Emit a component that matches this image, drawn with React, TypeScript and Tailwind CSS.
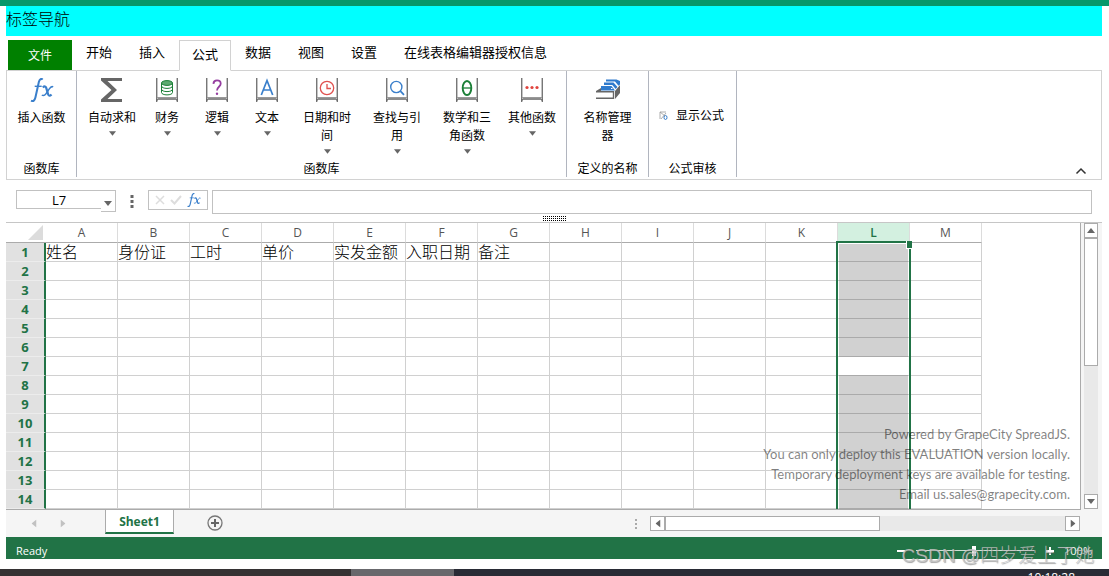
import React, { useState } from 'react';

const tabs = ['开始', '插入', '公式', '数据', '视图', '设置', '在线表格编辑器授权信息'];
const columns = ['A', 'B', 'C', 'D', 'E', 'F', 'G', 'H', 'I', 'J', 'K', 'L', 'M'];
const titles = ['姓名', '身份证', '工时', '单价', '实发金额', '入职日期', '备注'];
const rows = Array.from({ length: 14 }, (_, i) => i + 1);

const BookIcon = ({ children }: { children: React.ReactNode }) => (
	<svg width="24" height="24" viewBox="0 0 24 24" fill="none">
		<path d="M1.5 0v24M22.500 0v24" stroke="#777" />
		<path d="M2.5 0v20M21.500 0v20" stroke="#c4c4c4" />
		<path d="M2 19.500h20" stroke="#999" />
		<path d="M2 23.500v-2l1.500-.5h17l1.500.5v2" stroke="#666" strokeWidth="1.3" />
		{children}
	</svg>
);

const MoneyIcon = () => (
	<BookIcon>
		<path
			d="M6.5 5v9.5c0 1.4 2.500 2.400 5.500 2.400s5.500-1 5.500-2.400V5"
			fill="#fff"
			stroke="#1b7f37"
		/>
		<path
			d="M6.5 8c0 1.4 2.500 2.400 5.500 2.400s5.500-1 5.500-2.400M6.500 11.200c0 1.400 2.500 2.400 5.500 2.400s5.500-1 5.500-2.400"
			stroke="#1b7f37"
		/>
		<ellipse cx="12" cy="5" rx="5.5" ry="2.4" fill="#5cab70" stroke="#1b7f37" />
	</BookIcon>
);

const LogicIcon = () => (
	<BookIcon>
		<path
			d="M8.4 5.800C8.600 3.500 10 2.400 12 2.400c2.200 0 3.700 1.300 3.700 3.300 0 3-3.700 3.200-3.700 6.900"
			stroke="#953da0"
			strokeWidth="1.8"
		/>
		<circle cx="12" cy="15.8" r="1.2" fill="#953da0" />
	</BookIcon>
);

const TextIcon = () => (
	<BookIcon>
		<path d="M6.3 17 12 2.500 17.700 17M8.300 12h7.400" stroke="#3a7fcb" strokeWidth="1.7" />
	</BookIcon>
);

const ClockIcon = () => (
	<BookIcon>
		<circle cx="12" cy="10" r="6.7" stroke="#e0514f" strokeWidth="1.3" />
		<path d="M12 6v4.500h4" stroke="#e0514f" strokeWidth="1.3" />
	</BookIcon>
);

const LookupIcon = () => (
	<BookIcon>
		<circle cx="11.3" cy="9" r="5.6" stroke="#3a7fcb" strokeWidth="1.4" />
		<path d="m15.400 13.200 3.600 3.600" stroke="#3a7fcb" strokeWidth="1.8" />
	</BookIcon>
);

const MathIcon = () => (
	<BookIcon>
		<ellipse cx="12" cy="10" rx="4.3" ry="7" stroke="#1b7f37" strokeWidth="1.9" />
		<path d="M8 10h8" stroke="#1b7f37" strokeWidth="1.3" />
	</BookIcon>
);

const MoreIcon = () => (
	<BookIcon>
		<g fill="#e0443e">
			<circle cx="7" cy="9.5" r="1.6" />
			<circle cx="12" cy="9.5" r="1.6" />
			<circle cx="17" cy="9.5" r="1.6" />
		</g>
	</BookIcon>
);

const SumIcon = () => (
	<svg width="24" height="24" viewBox="0 0 24 24">
		<path d="M1 0h21v3H7.500l9.500 9-9.500 9H22v3H1v-2.500L11.500 12 1 2.500z" fill="#666" />
	</svg>
);

const FxIcon = ({ size }: { size: number }) => (
	<svg width={size} height={size} viewBox="0 0 24 24" fill="none" stroke="#3a7fcb">
		<path
			d="M12.600 1.600C11.500.3 9.700 1 8.900 3.800L5.400 19.500c-.7 3-2.200 4.200-4.400 3.200"
			strokeWidth="2"
		/>
		<path d="M4.700 8.300h7" strokeWidth="1.4" />
		<path d="M12.800 9.500c1.800-1.800 3-1.200 3.500.6l1.800 6.200c.5 1.800 1.700 2 3.400.1" strokeWidth="2.2" />
		<path d="M23.200 8.900c-1.700-.9-2.700.1-3.900 1.900l-3.400 5c-1.200 1.700-2.300 2.200-4.100 1.300" strokeWidth="1.5" />
	</svg>
);

const NameManagerIcon = () => (
	<svg width="26" height="24" viewBox="0 0 26 24">
		<path d="M1 13l5-3v3zM20 13l5-6v8l-5 6z" fill="#666" />
		<path d="M1 13.700h17.500v6.600H1" fill="#fff" stroke="#666" strokeWidth="1.4" />
		<path
			d="M6 12.500V8h10.500l3.500 4.500zM9 7V4.500h9.500L22.500 9l-1.800 2L17.300 7zM11 3.500V1.500h10.500L25 3v3.500l-1.500 1.300L20 3.500z"
			fill="#2f7bcd"
		/>
		<path d="M16 10.500h1.500" stroke="#fff" />
	</svg>
);

const ShowFormulaIcon = () => (
	<svg width="10" height="10" viewBox="0 0 10 10" fill="none">
		<path d="M1 8V1h6M1 1l5 4M2 8l5-6" stroke="#999" strokeWidth=".8" />
		<ellipse cx="6.5" cy="6.5" rx="1.5" ry="2" stroke="#3a7fcb" />
	</svg>
);

// small triangle used by drop-downs and scroll bars
const Arrow = ({ className = '' }: { className?: string }) => (
	<svg className={className} width="8" height="5" viewBox="0 0 8 5">
		<path d="M0 0h8L4 5z" fill="currentColor" />
	</svg>
);

const functions = [
	{ label: '自动求和', icon: <SumIcon />, width: 'w-[60px]' },
	{ label: '财务', icon: <MoneyIcon />, width: 'w-[50px]' },
	{ label: '逻辑', icon: <LogicIcon />, width: 'w-[50px]' },
	{ label: '文本', icon: <TextIcon />, width: 'w-[50px]' },
	{ label: '日期和时间', icon: <ClockIcon />, width: 'w-[70px]' },
	{ label: '查找与引用', icon: <LookupIcon />, width: 'w-[70px]' },
	{ label: '数学和三角函数', icon: <MathIcon />, width: 'w-[70px]' },
	{ label: '其他函数', icon: <MoreIcon />, width: 'w-[60px]' },
];

type RibbonButtonProps = {
	label: string;
	icon: React.ReactNode;
	width: string;
	dropdown?: boolean;
};

const RibbonButton = ({ label, icon, width, dropdown }: RibbonButtonProps) => (
	<button className={`${width} flex flex-col items-center`}>
		{icon}
		<span className="mt-[7px] w-[50px] text-center leading-[18px] break-all">{label}</span>
		{dropdown && <Arrow className="mt-1 w-[7px] text-[#666]" />}
	</button>
);

const RibbonGroup = ({ title, children }: { title: string; children: React.ReactNode }) => (
	<div className="flex flex-col justify-between border-r border-[#b1b5bf] pt-[7px]">
		<div className="flex grow items-start justify-center">{children}</div>
		<div className="text-center leading-4">{title}</div>
	</div>
);

const Ribbon = () => {
	const [active, setActive] = useState('公式');
	return (
		<div className="pt-1">
			<div className="flex h-[30px] pl-[2px] text-[13px]">
				<button className="w-16 bg-[#008000] pt-[2px] text-[12px] text-white">文件</button>
				<div className="ml-px flex gap-px">
					{tabs.map((tab) => (
						<button
							key={tab}
							onClick={() => setActive(tab)}
							className={`border px-3 ${
								tab === active
									? '-mb-px border-[#d2d2d2] border-b-white bg-white pb-[2px]'
									: 'border-transparent pb-1'
							}`}
						>
							{tab}
						</button>
					))}
				</div>
			</div>
			<div className="flex h-[110px] border border-[#d2d2d2] pb-[2px] text-[12px]">
				<RibbonGroup title="函数库">
					<div className="flex w-[69px] justify-center">
						<RibbonButton label="插入函数" icon={<FxIcon size={24} />} width="w-[60px]" />
					</div>
				</RibbonGroup>
				<RibbonGroup title="函数库">
					<div className="flex items-start pr-1 pl-[5px]">
						{functions.map((fn) => (
							<RibbonButton key={fn.label} {...fn} dropdown />
						))}
					</div>
				</RibbonGroup>
				<RibbonGroup title="定义的名称">
					<div className="flex w-[81px] justify-center">
						<RibbonButton label="名称管理器" icon={<NameManagerIcon />} width="w-[60px]" />
					</div>
				</RibbonGroup>
				<RibbonGroup title="公式审核">
					<button className="flex w-[87px] items-center gap-[7px] self-center pb-2 pl-[10px]">
						<ShowFormulaIcon />
						显示公式
					</button>
				</RibbonGroup>
				<button aria-label="collapse" className="mr-[14px] mb-[2px] ml-auto self-end">
					<svg width="12" height="8" viewBox="0 0 12 8" fill="none">
						<path d="M1.500 6.500 6 2l4.500 4.500" stroke="#333" strokeWidth="1.5" />
					</svg>
				</button>
			</div>
		</div>
	);
};

const FormulaBar = () => (
	<div className="flex h-[42px] items-start px-[10px] pt-[10px]">
		<div className="flex">
			<input
				aria-label="name box"
				defaultValue="L7"
				className="h-[19px] w-[85px] border border-r-0 border-[#c1c1c1] pt-[2px] text-center font-['Open_Sans',sans-serif] text-[13px]"
			/>
			<button
				aria-label="names"
				className="flex h-[22px] w-[15px] items-center justify-center border border-l-0 border-[#c1c1c1] pt-1 text-[#666]"
			>
				<Arrow />
			</button>
		</div>
		<svg className="mt-1 ml-[14px]" width="4" height="16" viewBox="0 0 4 16" fill="#666">
			<path d="M.5 1h3v3h-3zM.5 6h3v3h-3zM.5 11h3v3h-3z" />
		</svg>
		<div className="ml-[14px] flex h-5 w-[60px] items-center justify-between border border-[#c1c1c1] px-[6px]">
			<svg width="10" height="10" viewBox="0 0 10 10">
				<path d="m1 1 8 8M9 1 1 9" stroke="#ddd" strokeWidth="1.5" />
			</svg>
			<svg width="12" height="10" viewBox="0 0 12 10" fill="none">
				<path d="m1 5 3.500 3.500L11 1" stroke="#ddd" strokeWidth="2" />
			</svg>
			<FxIcon size={14} />
		</div>
		<div className="ml-1 grow">
			<input aria-label="formula" className="block h-6 w-full border border-[#c1c1c1] px-1" />
			<svg className="mt-[2px] ml-[331px]" width="24" height="5" viewBox="0 0 24 5">
				<path
					d="M0 .5h24M0 2.500h24M0 4.500h24"
					stroke="#000"
					strokeDasharray="1 1"
					shapeRendering="crispEdges"
				/>
			</svg>
		</div>
	</div>
);

const Sheet = () => (
	<div className="relative min-w-0 grow overflow-hidden border-r border-b border-[#ababab]">
		<table className="w-[976px] table-fixed border-separate border-spacing-0">
			<thead>
				<tr className="h-5 font-['Open_Sans',sans-serif] text-[12px] leading-[18px] text-[#555]">
					<th className="w-10 border-b border-[#ababab] p-0">
						<svg className="mr-[2px] ml-auto" width="16" height="16" viewBox="0 0 16 16">
							<path d="M15 0v15H0z" fill="#dcdcdc" />
						</svg>
					</th>
					{columns.map((col) => (
						<th
							key={col}
							className={`w-[72px] border-r border-b border-r-[#dcdcdc] border-b-[#ababab] p-0 pt-px ${
								col === 'L' ? 'bg-[#d3f0e0] font-semibold text-[#217346]' : 'font-normal'
							}`}
						>
							{col}
						</th>
					))}
				</tr>
			</thead>
			<tbody>
				{rows.map((row) => (
					<tr key={row} className="h-[19px]">
						<th className="border-r-2 border-b border-r-[#217346] border-b-[#ececec] bg-[#e1e1e1] p-0 font-['Open_Sans',sans-serif] text-[13px] leading-[18px] font-bold text-[#217346]">
							{row}
						</th>
						{columns.map((col, i) => (
							<td
								key={col}
								className="border-r border-b border-[#d0d0d0] p-0 text-[16px] leading-[18px] font-light whitespace-nowrap"
							>
								{row === 1 ? titles[i] : ''}
							</td>
						))}
					</tr>
				))}
			</tbody>
		</table>
		{/* selected column, row 7 holds the active cell */}
		<div className="absolute top-[18px] -bottom-1 left-[830px] flex w-[75px] flex-col border-2 border-[#217346] p-px">
			<div className="h-[113px] bg-black/18" />
			<div className="h-[18px] bg-white" />
			<div className="grow bg-black/18" />
			<div className="absolute -top-[2px] -right-[3px] h-2 w-[6px] border-b border-l border-white bg-[#217346]" />
		</div>
		<div className="absolute right-[10px] bottom-[5px] text-right font-[Lato,sans-serif] text-[13px] leading-5 text-black/50">
			<p>Powered by GrapeCity SpreadJS.</p>
			<p>You can only deploy this EVALUATION version locally.</p>
			<p>Temporary deployment keys are available for testing.</p>
			<p>Email us.sales@grapecity.com.</p>
		</div>
	</div>
);

const VerticalScroll = () => (
	<div className="flex w-[21px] shrink-0 flex-col bg-[#f5f5f5] pr-1 pl-[3px] text-[#666]">
		<button
			aria-label="up"
			className="flex h-[15px] items-center justify-center border border-[#ababab] bg-white"
		>
			<Arrow className="rotate-180" />
		</button>
		<div className="grow bg-[#e9e9e9]">
			<div className="h-[128px] border border-[#ababab] bg-white" />
		</div>
		<button
			aria-label="down"
			className="mb-px flex h-[15px] items-center justify-center border border-[#ababab] bg-white"
		>
			<Arrow />
		</button>
	</div>
);

const TabStrip = () => (
	<div className="flex h-[27px] items-start bg-[#f5f5f5]">
		<div className="flex w-[99px] items-center gap-[21px] pt-[11px] pl-[24px] text-[#c1c1c1]">
			<button aria-label="previous sheet">
				<Arrow className="rotate-90" />
			</button>
			<button aria-label="next sheet">
				<Arrow className="-rotate-90" />
			</button>
		</div>
		<button className="h-6 w-[69px] border-x border-b-2 border-x-[#ababab] border-b-[#217346] bg-white pt-px font-['Open_Sans',sans-serif] text-[12px] font-bold text-[#217346]">
			Sheet1
		</button>
		<button aria-label="add sheet" className="mt-[5px] ml-[33px]">
			<svg width="16" height="16" viewBox="0 0 16 16" fill="none">
				<circle cx="8" cy="8" r="7" stroke="#777" strokeWidth="1.3" />
				<path d="M8 4v8M4 8h8" stroke="#666" strokeWidth="2" />
			</svg>
		</button>
		<div className="ml-auto flex items-center pt-[6px]">
			<svg width="2" height="10" viewBox="0 0 2 10" fill="#aaa">
				<path d="M0 0h2v2H0zM0 4h2v2H0zM0 8h2v2H0z" />
			</svg>
			<div className="mr-[22px] ml-[13px] flex h-[15px] w-[430px] bg-[#e9e9e9] text-[#666]">
				<button
					aria-label="left"
					className="flex w-[15px] items-center justify-center border border-[#ababab] bg-white"
				>
					<Arrow className="shrink-0 rotate-90" />
				</button>
				<div className="w-[215px] border border-[#ababab] bg-white" />
				<button
					aria-label="right"
					className="ml-auto flex w-[15px] items-center justify-center border border-[#ababab] bg-white"
				>
					<Arrow className="shrink-0 -rotate-90" />
				</button>
			</div>
		</div>
	</div>
);

const StatusBar = () => (
	<div className="relative flex h-[22px] items-center justify-between bg-[#217346] px-[10px] pt-[6px] font-['Open_Sans',sans-serif] text-[11px] text-white">
		<span>Ready</span>
		<div className="flex items-center gap-[10px]">
			<svg width="157" height="10" viewBox="0 0 157 10">
				<path d="M0 4h8v2H0zM149 4h8v2h-8zM152 1h2v8h-2z" fill="#fff" />
				<path d="M19 4.500h118" stroke="#d0e0d6" />
				<path d="M75 0h4v10h-4z" fill="#fff" />
			</svg>
			<span>100%</span>
		</div>
		<span className="absolute top-[6px] right-[8px] font-['Liberation_Sans','Noto_Sans_CJK_SC',sans-serif] text-[19px] leading-[26px] font-light whitespace-nowrap text-[#c4c4c4]/85 [text-shadow:1px_1px_1px_#5558]">
			CSDN @四岁爱上了她
		</span>
	</div>
);

export default function App() {
	return (
		<div className="bg-white font-['Open_Sans','Noto_Sans_CJK_SC',sans-serif] text-black">
			<div className="h-[6px] bg-[#07976a]" />
			<div className="mr-[7px] ml-[6px]">
				<header className="h-[30px] bg-[#00ffff] text-[16px] leading-[26px] font-light">
					标签导航
				</header>
				<Ribbon />
				<FormulaBar />
				<div className="flex border-t border-[#c6c6c6]">
					<Sheet />
					<VerticalScroll />
				</div>
				<TabStrip />
				<StatusBar />
			</div>
			<div className="mt-[10px] flex h-[7px] overflow-hidden bg-[#292b35] text-white">
				<div className="w-[351px] bg-[#353233]" />
				<div className="w-[103px] bg-[#68686c]" />
				<span className="mr-[34px] ml-auto pt-px text-[12px] leading-4">10:18:28</span>
			</div>
		</div>
	);
}
